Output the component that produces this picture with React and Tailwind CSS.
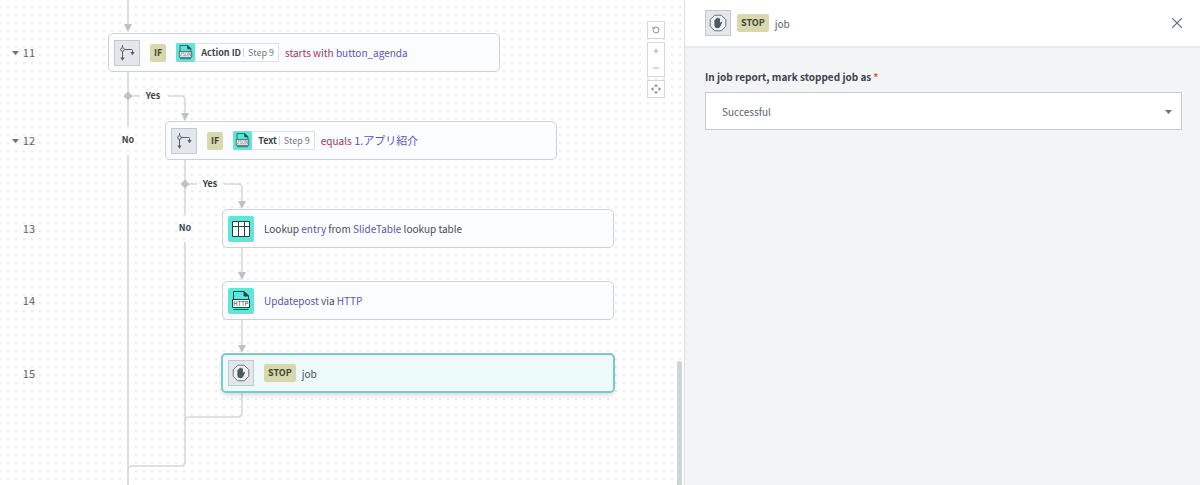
import { Plus, Minus, X, RotateCcw } from 'lucide-react';

function BranchIcon() {
  return (
    <span className="flex size-[26px] shrink-0 items-center justify-center border border-[#c3c9cf] bg-[#e3e7eb]">
      <svg viewBox="0 0 26 26" className="size-[26px] shrink-0" fill="none" stroke="#566069" strokeWidth="1">
        <path d="M8.500 5v2.500M8.500 11v8M10.500 9.500H17.500Q18.500 9.500 18.500 10.500V13" />
        <circle cx="8.500" cy="9.500" r="1.800" />
        <path d="M6.300 17.500h4.400l-2.200 3.200zM16.300 12h4.400l-2.200 3.200z" fill="#566069" stroke="none" />
      </svg>
    </span>
  );
}

function StopIcon() {
  return (
    <span className="flex size-[26px] shrink-0 items-center justify-center border border-[#c3c9cf] bg-[#e3e7eb]">
      <svg viewBox="0 0 18 18" className="size-[18px] shrink-0">
        <path d="M5.700 1.200h6.600l4.500 4.500v6.600l-4.500 4.500H5.700l-4.500-4.500V5.700z" fill="#eef1f4" stroke="#68747e" strokeWidth="1" />
        <path
          d="M5.400 6q.6-.7 1.300-.2V4.600q.8-.8 1.400-.1V4q.9-.8 1.500 0v.7q.8-.7 1.400.1v4.100l.9-.9q1.100-.5 1.200.6l-1.700 3.700q-.8 1.900-2.700 1.900-3.200 0-3.300-2.900z"
          fill="#4c5964"
        />
      </svg>
    </span>
  );
}

function TableIcon() {
  return (
    <span className="flex size-[26px] shrink-0 items-center justify-center rounded-xs bg-[#5fe6d8]">
      <svg viewBox="0 0 18 16" className="h-4 w-[18px]" fill="#fff" stroke="#24424a" strokeWidth="1">
        <path d="M.5.5h17v15H.5zM.5 5.500h17M6.500.5v15M12.500.5v15" />
      </svg>
    </span>
  );
}

function FileIcon({ label, className }) {
  return (
    <span className={`flex shrink-0 items-center justify-center rounded-xs bg-[#5fe6d8] ${className}`}>
      <svg viewBox="0 0 26 26" className="size-full" fill="none" stroke="#24424a" strokeWidth="1">
        <path d="M5.500 12V3.500H16l4.500 4.500v4" />
        <path d="M16 3.500V8h4.500z" fill="#24424a" />
        <path d="M4.500 11.500h17v8h-17z" fill="#fff" />
        <path d="M5.500 21.500h15" />
        <text x="13" y="17.600" textAnchor="middle" fontSize="6" fill="#24424a" stroke="none">
          {label}
        </text>
      </svg>
    </span>
  );
}

function Badge({ children }) {
  return (
    <span className="flex h-[18px] shrink-0 items-center rounded-xs bg-[#d9d8ac] px-1 text-[9px] font-bold text-[#3f4636]">
      {children}
    </span>
  );
}

function Datapill({ name }) {
  return (
    <span className="flex h-[19px] items-center border border-[#dde1e6] bg-white pr-1 text-[9px] leading-none">
      <FileIcon label="JSON" className="-ml-px size-[19px]" />
      <strong className="ml-1.5 font-bold text-[#3a444e]">{name}</strong>
      <span className="ml-0.5 border-l border-[#cfd4d9] pl-1 text-[#6f7780]">Step 9</span>
    </span>
  );
}

function Value({ children }) {
  return <span className="text-[#5b55b8]">{children}</span>;
}

function Step({ number, caret, className, active, children }) {
  return (
    <li className="flex items-center">
      <div className="flex w-[35px] shrink-0 items-center justify-end gap-1 text-[11px] text-[#59626b]">
        {caret && (
          <button type="button" aria-label="Collapse step">
            <svg viewBox="0 0 7 4" className="h-1 w-[7px]" fill="#6b737b">
              <path d="M0 0h7L3.500 4z" />
            </svg>
          </button>
        )}
        {number}
      </div>
      <div
        className={`flex items-center gap-2.5 rounded-[5px] px-[5px] text-[10px] whitespace-nowrap text-[#444c54] ${className} ${
          active
            ? 'h-10 w-[394px] border-2 border-[#7cc9cb] bg-[#ecfafa] shadow-md'
            : 'h-[39px] w-[392px] border border-[#cdd1d8] bg-[#fafcfe]'
        }`}
      >
        {children}
      </div>
    </li>
  );
}

function Connectors() {
  return (
    <svg className="pointer-events-none absolute inset-0 h-full w-full" fill="none" stroke="#d3d6da" strokeWidth="1.500">
      <path d="M128 0v26M128 72v54M128 155v400" />
      <path d="M128 96h12M168 96h13q4 0 4 4v16" />
      <path d="M185 160v55M185 242v220q0 4-4 4h-49q-4 0-4 4" />
      <path d="M185 184h12M224 184h14q4 0 4 4v16" />
      <path d="M242 248v28M242 320v28M242 393v20q0 4-4 4h-49q-4 0-4 4" />
      <g fill="#bec2c8" stroke="none">
        <path d="M124 24h8l-4 8zM181 113h8l-4 8zM238 201h8l-4 8zM238 272h8l-4 8zM238 345h8l-4 8z" />
        <path d="M128 91.500l4.500 4.500-4.500 4.500-4.500-4.500zM185 179.500l4.500 4.500-4.500 4.500-4.500-4.500z" />
      </g>
    </svg>
  );
}

function EdgeLabel({ className, children }) {
  return (
    <span className={`absolute -translate-x-1/2 -translate-y-1/2 text-[9px] leading-3 font-bold text-[#39434c] ${className}`}>
      {children}
    </span>
  );
}

const toolBox = 'flex w-[18px] flex-col items-center border border-[#d3d7db] bg-white text-[#8a9097]';

function CanvasTools() {
  return (
    <div className="absolute top-[21px] right-[19px] flex flex-col gap-[3px]">
      <div className={toolBox}>
        <button type="button" aria-label="Undo" className="flex size-4 items-center justify-center">
          <RotateCcw size={8} strokeWidth={3} />
        </button>
      </div>
      <div className={toolBox}>
        <button type="button" aria-label="Zoom in" className="flex size-4 items-center justify-center">
          <Plus size={8} />
        </button>
        <button type="button" aria-label="Zoom out" className="flex h-[17px] w-4 items-center justify-center">
          <Minus size={8} />
        </button>
      </div>
      <div className={toolBox}>
        <button type="button" aria-label="Fit to screen" className="flex size-4 items-center justify-center">
          <svg viewBox="0 0 10 10" className="size-2.5" fill="#7f868d">
            <path d="M5 0l2 2.500H3zM5 10l2-2.500H3zM0 5l2.500-2v4zM10 5L7.500 3v4z" />
          </svg>
        </button>
      </div>
    </div>
  );
}

function Recipe() {
  return (
    <main className="relative w-[57%] shrink-0 overflow-hidden bg-white bg-[radial-gradient(circle,#e9ebed_0.7px,transparent_1px)] bg-[size:8px_8px] bg-[position:4px_3px]">
      <Connectors />
      <ol className="relative pt-[33px]">
        <Step number={11} caret className="ml-[73px]">
          <BranchIcon />
          <Badge>IF</Badge>
          <span className="flex items-center gap-1.5">
            <Datapill name="Action ID" />
            <span className="text-[#b03060]">
              starts with <Value>button_agenda</Value>
            </span>
          </span>
        </Step>
        <li className="h-[49px]" aria-hidden="true" />
        <Step number={12} caret className="ml-[130px]">
          <BranchIcon />
          <Badge>IF</Badge>
          <span className="flex items-center gap-1.5">
            <Datapill name="Text" />
            <span className="text-[11px] text-[#b03060]">
              <span className="text-[10px]">equals</span> <Value>1.アプリ紹介</Value>
            </span>
          </span>
        </Step>
        <li className="h-[49px]" aria-hidden="true" />
        <Step number={13} className="ml-[187px]">
          <TableIcon />
          <span>
            Lookup <Value>entry</Value> from <Value>SlideTable</Value> lookup table
          </span>
        </Step>
        <li className="h-[33px]" aria-hidden="true" />
        <Step number={14} className="ml-[187px]">
          <FileIcon label="HTTP" className="size-[26px]" />
          <span>
            <Value>Updatepost</Value> via <Value>HTTP</Value>
          </span>
        </Step>
        <li className="h-[33px]" aria-hidden="true" />
        <Step number={15} active className="ml-[186px]">
          <StopIcon />
          <span className="flex items-center gap-1.5">
            <Badge>STOP</Badge>
            job
          </span>
        </Step>
      </ol>
      <EdgeLabel className="top-[96px] left-[153px]">Yes</EdgeLabel>
      <EdgeLabel className="top-[140px] left-[128px]">No</EdgeLabel>
      <EdgeLabel className="top-[184px] left-[210px]">Yes</EdgeLabel>
      <EdgeLabel className="top-[228px] left-[185px]">No</EdgeLabel>
      <CanvasTools />
      <div className="absolute top-[361px] right-0.5 bottom-0 w-[5px] rounded-t-xs bg-[#cdd5d5]" />
    </main>
  );
}

function StepPanel() {
  return (
    <aside className="flex grow flex-col border-l border-[#dce0e3] bg-[#f2f4f6]">
      <header className="flex items-center gap-1.5 border-b-2 border-[#e8ebed] bg-white py-2.5 pr-[18px] pl-5 text-[10px] text-[#59626b]">
        <StopIcon />
        <Badge>STOP</Badge>
        <h1>job</h1>
        <button type="button" aria-label="Close" className="-mr-1 ml-auto text-[#6b737b]">
          <X size={18} strokeWidth={1.5} />
        </button>
      </header>
      <form className="flex flex-col gap-1.5 pt-5 pr-[18px] pl-5 text-[#3a444e]">
        <label htmlFor="mark-as" className="text-[10px] leading-[18px] font-bold">
          In job report, mark stopped job as
          <span className="ml-0.5 text-[#e5533d]">*</span>
        </label>
        <div className="relative">
          <select
            id="mark-as"
            className="h-[38px] w-full appearance-none border border-[#c6cbd0] bg-white px-4 text-[10px] text-[#59626b]"
          >
            <option>Successful</option>
          </select>
          <svg viewBox="0 0 7 4" className="pointer-events-none absolute top-[18px] right-2.5 h-1 w-[7px]" fill="#6b737b">
            <path d="M0 0h7L3.500 4z" />
          </svg>
        </div>
      </form>
    </aside>
  );
}

export default function App() {
  return (
    <div className="flex min-h-screen font-['Noto_Sans_CJK_JP',sans-serif]">
      <Recipe />
      <StepPanel />
    </div>
  );
}
